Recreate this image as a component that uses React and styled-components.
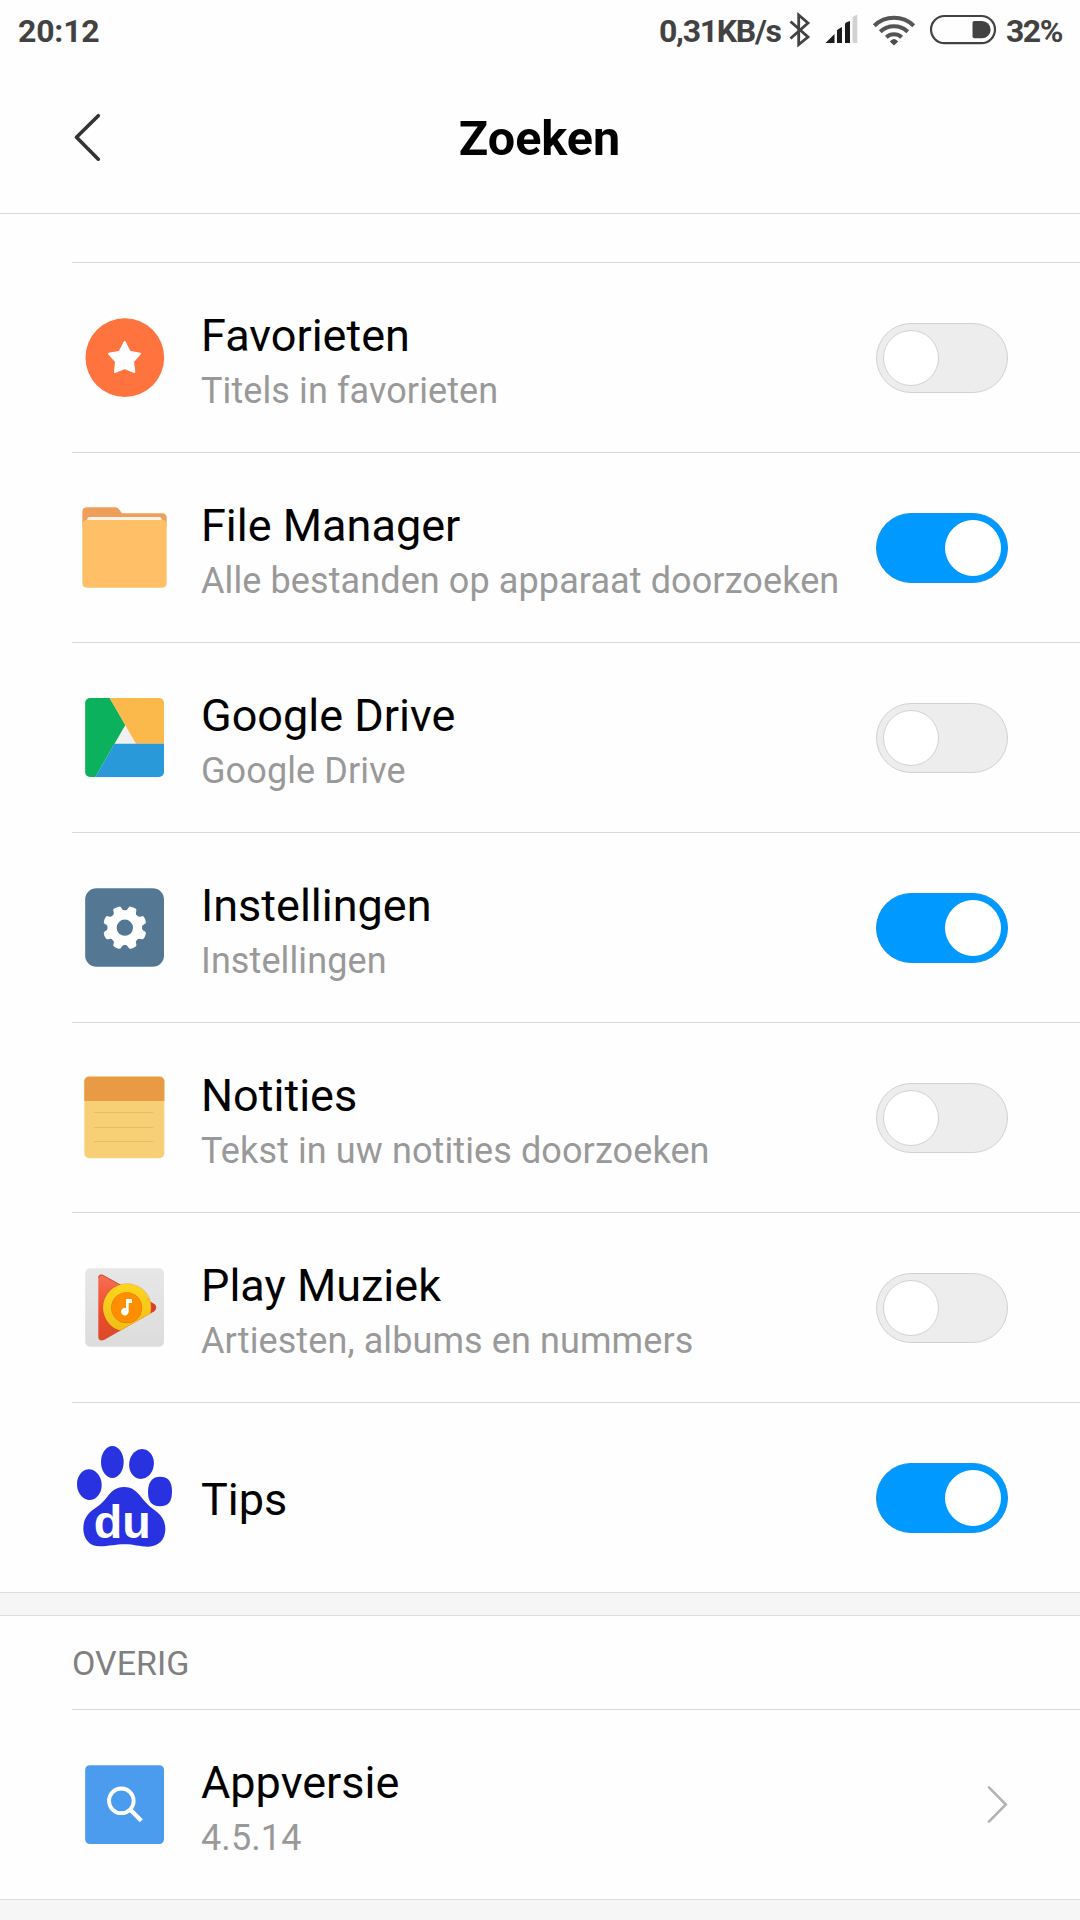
import React from "react";
import styled, { createGlobalStyle } from "styled-components";

const GlobalStyle = createGlobalStyle`
  * { box-sizing: border-box; }
  html, body { margin: 0; padding: 0; background: #fefefe; }
  body { font-family: Roboto, "Noto Sans", sans-serif; overflow: hidden; }
  svg { display: block; flex: none; }
`;

const Screen = styled.div`
  width: 1080px;
  height: 1920px;
  overflow: hidden;
  display: flex;
  flex-direction: column;
  background: #fefefe;
`;

const StatusBar = styled.header`
  height: 60px;
  flex: none;
  display: flex;
  justify-content: space-between;
  padding: 0 18px;
  color: #424242;
  font-size: 32px;
  line-height: 62px;
  font-weight: 700;
  letter-spacing: -0.2px;
  white-space: nowrap;
`;

const StatusGroup = styled.div`
  display: flex;
`;

const Speed = styled.span`
  width: 129px;
  letter-spacing: -1.3px;
`;

const Percent = styled.span`
  width: 56px;
  letter-spacing: -1.5px;
`;

const TitleBar = styled.div`
  height: 154px;
  flex: none;
  display: grid;
  grid-template-columns: 120px 1fr 120px;
  align-items: center;
  border-bottom: 1px solid #d9d9d9;
`;

const BackButton = styled.button`
  border: 0;
  padding: 0 0 0 72px;
  background: none;
`;

const PageTitle = styled.h1`
  margin: 0;
  padding: 5px 1px 0 0;
  text-align: center;
  font-size: 48.5px;
  line-height: 56px;
  font-weight: 700;
  color: #000;
`;

const List = styled.section`
  flex: none;
  padding-top: ${(p) => p.$top || 0}px;
`;

const Row = styled.div`
  height: 190px;
  margin-left: 72px;
  padding-right: 72px;
  border-top: 1px solid #d9d9d9;
  display: flex;
  align-items: center;
`;

const Labels = styled.div`
  flex: 1;
  margin-left: 24px;
  padding-top: ${(p) => (p.$single ? 4 : 6)}px;
  white-space: nowrap;
`;

const Name = styled.div`
  font-size: 45px;
  line-height: 56px;
  color: #000;
`;

const Detail = styled.div`
  font-size: 36px;
  line-height: 46px;
  letter-spacing: 0.1px;
  margin-top: 4px;
  color: #999;
`;

const Track = styled.button`
  width: 132px;
  height: 70px;
  flex: none;
  margin: 1px 0 0;
  padding: 0 6px;
  display: flex;
  align-items: center;
  justify-content: ${(p) => (p.$on ? "flex-end" : "flex-start")};
  border: 1px solid ${(p) => (p.$on ? "#1593ec" : "#d2d2d2")};
  border-radius: 35px;
  background: ${(p) => (p.$on ? "#0099ff" : "#ededed")};
`;

const Knob = styled.span`
  width: 56px;
  height: 56px;
  border-radius: 50%;
  background: #fff;
  border: 1px solid ${(p) => (p.$on ? "#fff" : "#d2d2d2")};
`;

const Gap = styled.div`
  height: ${(p) => p.$height}px;
  flex: none;
  background: #f6f6f6;
  border-top: 1px solid #dedede;
  border-bottom: 1px solid #dedede;
`;

const SectionTitle = styled.h2`
  margin: 0;
  height: 93px;
  padding-left: 72px;
  font-size: 34px;
  line-height: 95px;
  font-weight: 400;
  color: #808080;
`;

const AppIcon = ({ box, children }) => (
  <svg width="105" height="105" viewBox={box}>{children}</svg>
);

const Favorites = () => (
  <AppIcon box="36 45 315 315">
    <circle cx="194.5" cy="203" r="118" fill="#ff733f" />
    <path
      d="M194 156 L209 185 L240 191 L219 215 L223 246 L194 234 L165 246 L168 215 L147 191 L179 185 Z"
      fill="#fff" stroke="#fff" strokeWidth="6" strokeLinejoin="round"
    />
  </AppIcon>
);

const Folder = () => (
  <AppIcon box="36 45 315 315">
    <path d="M67 140 V96 Q67 82 81 82 H166 Q172 82 176 87 L186 100 H306 Q320 100 320 114 V140 Z" fill="#ef9f5c" />
    <path d="M82 122 V118 Q82 111 89 111 H298 Q305 111 305 118 V122 Z" fill="#fff3ea" />
    <path d="M67 134 Q67 120 81 120 H306 Q320 120 320 134 V309 Q320 323 306 323 H81 Q67 323 67 309 Z" fill="#ffbf66" />
  </AppIcon>
);

const Drive = () => (
  <AppIcon box="36 45 315 315">
    <defs>
      <clipPath id="driveTile"><rect x="75.5" y="84" width="236.5" height="237" rx="15" /></clipPath>
    </defs>
    <g clipPath="url(#driveTile)">
      <path d="M75 84 H312 V321 H75 Z" fill="#f0f0f0" />
      <path d="M75 84 H149 L196 165 L106 321 H75 Z" fill="#0bb15d" />
      <path d="M149 84 H312 V221 H228 Z" fill="#fcb94b" />
      <path d="M163.500 221 H312 V321 H106 Z" fill="#2999d9" />
    </g>
  </AppIcon>
);

const Settings = () => (
  <AppIcon box="36 615 315 315">
    <rect x="75.500" y="654.500" width="236.500" height="236" rx="34" fill="#547893" />
    <circle cx="194.500" cy="773" r="52" fill="#fff" />
    {[22.5, 67.5, 112.5, 157.5, 202.5, 247.5, 292.5, 337.5].map((a) => (
      <path
        key={a}
        d="M174 728 Q182 723 182 713 Q182 709 187 708 Q194.500 706 202 708 Q207 709 207 713 Q207 723 215 728 Z"
        transform={`rotate(${a} 194.5 773)`}
        fill="#fff"
      />
    ))}
    <circle cx="194.500" cy="773" r="24.500" fill="#547893" />
  </AppIcon>
);

const Notes = () => (
  <AppIcon box="36 45 315 315">
    <rect x="73" y="79" width="240" height="246" rx="15" fill="#f7cf77" />
    <path d="M73 153 V94 Q73 80 88 80 H298 Q313 80 313 94 V153 Z" fill="#e89a45" />
    <path d="M103 187.500 H279 M103 232.500 H279 M103 274.500 H279" stroke="#efb85f" strokeWidth="3" />
  </AppIcon>
);

const PlayMusic = () => (
  <AppIcon box="36 615 315 315">
    <defs>
      <linearGradient id="musicTile" x1="0" y1="0" x2="0" y2="1">
        <stop offset="0" stopColor="#e7e7e7" />
        <stop offset="1" stopColor="#dcdcdc" />
      </linearGradient>
      <linearGradient id="musicRed" x1="0" y1="0" x2="0" y2="1">
        <stop offset="0" stopColor="#f96e54" />
        <stop offset="0.6" stopColor="#ec4c2b" />
        <stop offset="1" stopColor="#d94b29" />
      </linearGradient>
      <linearGradient id="musicYellow" x1="0" y1="0" x2="0" y2="1">
        <stop offset="0" stopColor="#fdd520" />
        <stop offset="1" stopColor="#efbd14" />
      </linearGradient>
      <clipPath id="musicEdge"><path d="M75 654 H312 V767 L130 871 H75 Z" /></clipPath>
    </defs>
    <rect x="75.500" y="654.500" width="236.500" height="236" rx="15" fill="url(#musicTile)" />
    <path
      d="M115 684 Q115 670 129 675 L283 762 Q295 772 283 784 L132 870 Q115 875 115 860 Z"
      fill="url(#musicRed)"
    />
    <path d="M116 684 Q116 672 129 676 L183 706" fill="none" stroke="#b94a36" strokeWidth="2.500" />
    <path d="M274 757 L283 763 Q293 772 283 783 L274 788 Z" fill="#db3f2c" />
    <g clipPath="url(#musicEdge)">
      <circle cx="201" cy="774" r="74" fill="#c9471e" opacity="0.35" />
      <circle cx="201" cy="773" r="72" fill="url(#musicYellow)" />
      <circle cx="200" cy="773" r="46.500" fill="#e87d05" />
      <circle cx="200" cy="773" r="44.500" fill="#ff8f00" />
    </g>
    <path d="M198 747 H216 V759 H206 V784 A11.500 11.500 0 1 1 198 774 Z" fill="#fff" />
  </AppIcon>
);

const Paw = () => (
  <AppIcon box="36 75 315 315">
    <g fill="#2932e1">
      <ellipse cx="88" cy="194" rx="37" ry="46" transform="rotate(-4 88 194)" />
      <ellipse cx="157" cy="126" rx="34" ry="48" />
      <ellipse cx="244.500" cy="132" rx="37" ry="45" transform="rotate(8 244.5 132)" />
      <path d="M300 170 C327 170 336 188 336 214 C336 245 326 259 300 259 C273 259 264 242 264 216 C264 188 275 170 300 170 Z" />
      <path d="M192 201 C218 201 232 216 244 232 C262 256 276 264 292 277 C308 291 316 306 316 328 C316 358 296 380 264 380 C238 380 222 373 194 373 C166 373 146 379 120 379 C90 379 70 358 70 326 C70 300 80 284 98 270 C116 257 130 247 142 230 C154 214 168 201 192 201 Z" />
    </g>
    <text x="101" y="353.500" fontFamily="'Liberation Sans', Arial, sans-serif" fontWeight="700" fontSize="140" fill="#fff">du</text>
  </AppIcon>
);

const SearchTile = () => (
  <AppIcon box="216 516 315 315">
    <rect x="255.500" y="555.500" width="236.500" height="236.500" rx="14" fill="#4b9cee" />
    <circle cx="364" cy="662.500" r="37" fill="none" stroke="#fff" strokeWidth="11.500" />
    <path d="M391 689 L424 722" stroke="#fff" strokeWidth="13" />
  </AppIcon>
);

const StatusIcons = () => (
  <svg width="218" height="60" viewBox="788 0 218 60">
    <path d="M790.500 21.500 L808 37 L798.700 44.500 V15 L808 23 L790.500 38.500" fill="none" stroke="#424242" strokeWidth="2.800" strokeLinejoin="miter" />
    <path d="M825.500 43 L834.500 34 V43 Z M837 43 V30.500 Q837 29.500 842 27 V43 Z M845 43 V24 Q845 22.500 850 21 V43 Z" fill="#1c1c1c" />
    <path d="M852.500 43 V18 Q852.500 16 857.300 14.700 V43 Z" fill="#d2d2d2" />
    <g fill="none" stroke="#555" strokeWidth="4">
      <path d="M874.300 25.700 A28.500 28.500 0 0 1 913.700 25.700" />
      <path d="M880.300 31.700 A20 20 0 0 1 907.700 31.700" />
      <path d="M886.300 37.200 A11.500 11.500 0 0 1 901.700 37.200" />
    </g>
    <path d="M889.800 41.500 Q894 36.500 898.200 41.500 L894 45.500 Z" fill="#4a4a4a" />
    <rect x="931" y="16" width="64" height="27.200" rx="13.600" fill="none" stroke="#424242" strokeWidth="2.200" />
    <path d="M972.500 23 Q972.500 21 974.500 21 H982 A8.600 8.600 0 0 1 982 38.300 H974.500 Q972.500 38.300 972.500 36.300 Z" fill="#424242" />
  </svg>
);

const items = [
  { name: "Favorieten", detail: "Titels in favorieten", icon: Favorites, on: false },
  { name: "File Manager", detail: "Alle bestanden op apparaat doorzoeken", icon: Folder, on: true },
  { name: "Google Drive", detail: "Google Drive", icon: Drive, on: false },
  { name: "Instellingen", detail: "Instellingen", icon: Settings, on: true },
  { name: "Notities", detail: "Tekst in uw notities doorzoeken", icon: Notes, on: false },
  { name: "Play Muziek", detail: "Artiesten, albums en nummers", icon: PlayMusic, on: false },
  { name: "Tips", icon: Paw, on: true },
];

export default function App() {
  return (
    <Screen>
      <GlobalStyle />
      <StatusBar>
        <span>20:12</span>
        <StatusGroup>
          <Speed>0,31KB/s</Speed>
          <StatusIcons />
          <Percent>32%</Percent>
        </StatusGroup>
      </StatusBar>
      <TitleBar>
        <BackButton aria-label="Terug">
          <svg width="30" height="50" viewBox="72 112 30 50">
            <path d="M98.300 115.700 L76.500 137.200 L98.300 159.200" fill="none" stroke="#333" strokeWidth="3.600" strokeLinecap="round" strokeLinejoin="round" />
          </svg>
        </BackButton>
        <PageTitle>Zoeken</PageTitle>
      </TitleBar>
      <List $top={48}>
        {items.map(({ name, detail, icon: Icon, on }) => (
          <Row key={name}>
            <Icon />
            <Labels $single={!detail}>
              <Name>{name}</Name>
              {detail && <Detail>{detail}</Detail>}
            </Labels>
            <Track $on={on} role="switch" aria-checked={on} aria-label={name}>
              <Knob $on={on} />
            </Track>
          </Row>
        ))}
      </List>
      <Gap $height={24} />
      <List>
        <SectionTitle>OVERIG</SectionTitle>
        <Row>
          <SearchTile />
          <Labels>
            <Name>Appversie</Name>
            <Detail>4.5.14</Detail>
          </Labels>
          <svg width="24" height="40" viewBox="984 1785 24 40">
            <path d="M989 1787.300 L1005.800 1804.500 L989 1821.700" fill="none" stroke="#b3b3b3" strokeWidth="2.600" strokeLinecap="round" />
          </svg>
        </Row>
      </List>
      <Gap $height={40} />
    </Screen>
  );
}
